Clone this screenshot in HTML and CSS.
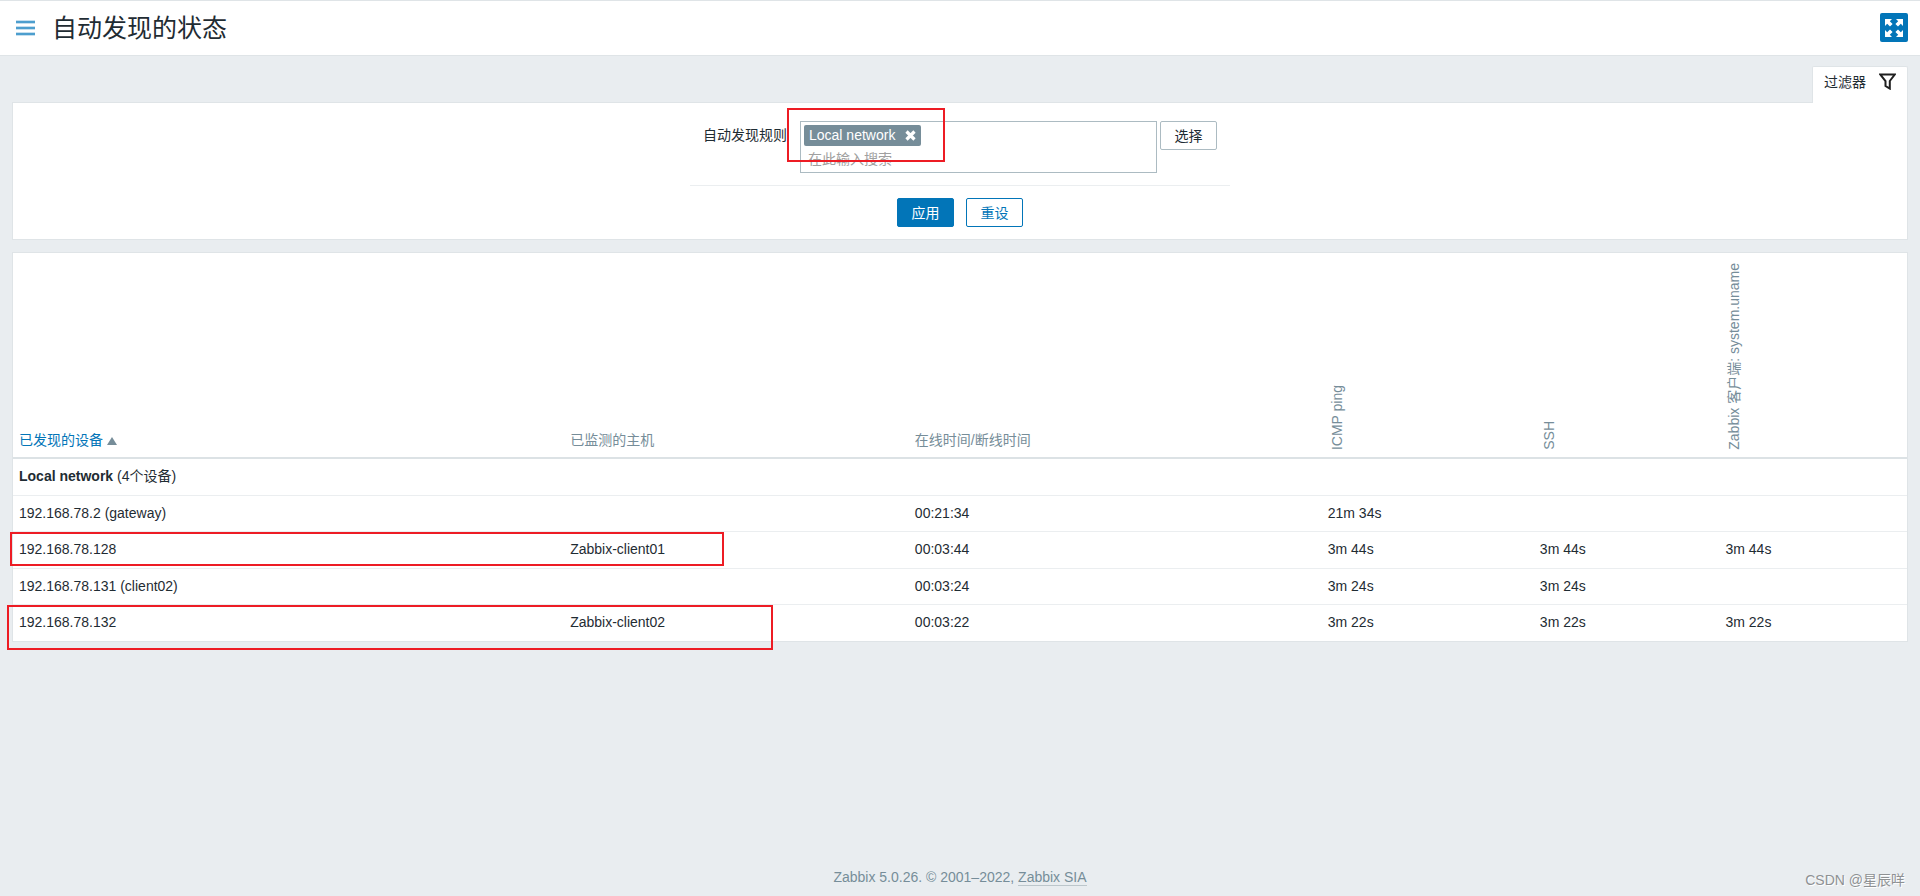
FILE: index.html
```
<!DOCTYPE html>
<html lang="zh-CN">
<head>
<meta charset="utf-8">
<meta name="viewport" content="width=device-width, initial-scale=1">
<title>自动发现的状态</title>
<link rel="stylesheet" href="styles.css">
</head>
<body>
<header class="page-header">
  <button class="menu-button" type="button" aria-label="菜单">
    <svg width="19" height="16" viewBox="0 0 19 16" aria-hidden="true"><path d="M0 2h19M0 8h19M0 14h19" stroke="#8bc0e0" stroke-width="3"/><path d="M0 2h19M0 8h19M0 14h19" stroke="#3a93c8" stroke-width="1.6"/></svg>
  </button>
  <h1 class="page-title">自动发现的状态</h1>
  <button class="fullscreen-button" type="button" aria-label="全屏">
    <svg width="18" height="18" viewBox="0 0 18 18" fill="#fff" aria-hidden="true">
      <path id="arrow" d="M0 0h7L4.800 2.200 7.600 5 5 7.600 2.200 4.800 0 7z"/>
      <use href="#arrow" transform="matrix(-1 0 0 1 18 0)"/>
      <use href="#arrow" transform="matrix(1 0 0 -1 0 18)"/>
      <use href="#arrow" transform="matrix(-1 0 0 -1 18 18)"/>
    </svg>
  </button>
</header>

<main class="content">
  <div class="filter-tabs">
    <button class="filter-tab" type="button">过滤器
      <svg width="17" height="17" viewBox="0 0 17 17" fill="none" stroke="#1f1f1f" stroke-width="2" aria-hidden="true"><path d="M1.200 1.500h14.600L10.800 8v7.600L6.500 13V8z"/></svg>
    </button>
  </div>

  <form class="panel filter">
    <div class="filter-row">
      <label class="filter-label" for="rule">自动发现规则</label>
      <div class="multiselect">
        <span class="tag">Local network
          <button class="tag-remove" type="button" aria-label="移除"><svg width="11" height="11" viewBox="0 0 11 11" aria-hidden="true"><path d="M1.500 1.500l8 8M9.500 1.500l-8 8" stroke="#fff" stroke-width="3.200"/></svg></button>
        </span>
        <input class="search" id="rule" type="text" placeholder="在此输入搜索">
        <div class="mark mark-rule"></div>
      </div>
      <button class="button button-grey" type="button">选择</button>
    </div>
    <div class="filter-actions">
      <button class="button button-primary" type="button">应用</button>
      <button class="button button-outline" type="button">重设</button>
    </div>
  </form>

  <section class="panel results">
    <table class="table">
      <colgroup><col class="col-device"><col class="col-host"><col class="col-uptime"><col class="col-icmp"><col class="col-ssh"><col class="col-agent"></colgroup>
      <thead>
        <tr>
          <th><a class="sort" href="#">已发现的设备<span class="sort-arrow"></span></a></th>
          <th>已监测的主机</th>
          <th>在线时间/断线时间</th>
          <th><span class="vertical">ICMP ping</span></th>
          <th><span class="vertical">SSH</span></th>
          <th><span class="vertical">Zabbix 客户端: system.uname</span></th>
        </tr>
      </thead>
      <tbody>
        <tr><td colspan="6"><b>Local network</b> (4个设备)</td></tr>
        <tr><td>192.168.78.2 (gateway)</td><td></td><td>00:21:34</td><td>21m 34s</td><td></td><td></td></tr>
        <tr><td>192.168.78.128</td><td>Zabbix-client01</td><td>00:03:44</td><td>3m 44s</td><td>3m 44s</td><td>3m 44s</td></tr>
        <tr><td>192.168.78.131 (client02)</td><td></td><td>00:03:24</td><td>3m 24s</td><td>3m 24s</td><td></td></tr>
        <tr><td>192.168.78.132</td><td>Zabbix-client02</td><td>00:03:22</td><td>3m 22s</td><td>3m 22s</td><td>3m 22s</td></tr>
      </tbody>
    </table>
    <div class="mark mark-first"></div>
    <div class="mark mark-second"></div>
  </section>
</main>

<footer class="footer">Zabbix 5.0.26. © 2001–2022, <a class="footer-link" href="#">Zabbix SIA</a></footer>
<div class="watermark">CSDN @星辰咩</div>
</body>
</html>
```
FILE: styles.css
```
* {
  box-sizing: border-box;
}

body {
  display: flex;
  flex-direction: column;
  position: relative;
  min-height: 100vh;
  margin: 0;
  background: #e9edf0;
  color: #1f2c33;
  font: 14px/20px "Liberation Sans", "Noto Sans CJK SC", sans-serif;
}

button,
input {
  font: inherit;
  color: inherit;
}

button {
  padding: 0;
  border: 0;
  background: none;
  cursor: pointer;
}

svg {
  display: block;
}

.page-header {
  display: flex;
  align-items: center;
  height: 56px;
  padding: 0 12px 1px 16px;
  border-top: 1px solid #dfe4e7;
  border-bottom: 1px solid #dfe4e7;
  background: #fff;
}

.page-title {
  flex: 1;
  margin: 0 0 0 17px;
  font-size: 25px;
  font-weight: 400;
  line-height: 36px;
}

.fullscreen-button {
  display: flex;
  align-items: center;
  justify-content: center;
  width: 28px;
  height: 29px;
  border-radius: 2px;
  background: #0275b8;
}

.content {
  flex: 1;
  padding: 10px 12px 0;
}

.filter-tabs {
  display: flex;
  justify-content: flex-end;
}

.filter-tab {
  display: flex;
  align-items: center;
  gap: 13px;
  position: relative;
  height: 37px;
  margin-bottom: -1px;
  padding: 0 11px 7px;
  border: 1px solid #dfe4e7;
  border-bottom: 0;
  border-radius: 2px 2px 0 0;
  background: #fff;
  z-index: 1;
}

.panel {
  position: relative;
  border: 1px solid #dfe4e7;
  background: #fff;
}

.filter {
  display: flex;
  flex-direction: column;
  align-items: center;
  padding: 18px 0 12px;
}

.filter-row {
  display: flex;
  align-items: flex-start;
  width: 540px;
  padding-bottom: 12px;
  border-bottom: 1px solid #ebeef0;
}

.filter-label {
  width: 97px;
  margin-right: 13px;
  padding-top: 4px;
  text-align: right;
}

.multiselect {
  position: relative;
  width: 357px;
  height: 52px;
  margin-right: 3px;
  padding: 3px;
  border: 1px solid #acbbc2;
}

.tag {
  display: flex;
  align-items: center;
  gap: 10px;
  width: max-content;
  height: 21px;
  padding: 0 5px 1px;
  border-radius: 2px;
  background: #768d99;
  color: #fff;
}

.tag-remove {
  flex: none;
}

.search {
  display: block;
  width: 100%;
  height: 26px;
  padding: 0 4px;
  border: 0;
  outline: 0;
  background: none;
}

.search::placeholder {
  color: #a0a0a0;
}

.button {
  width: 57px;
  height: 29px;
  border: 1px solid #0275b8;
  border-radius: 2px;
}

.button-grey {
  border-color: #acbbc2;
}

.button-primary {
  background: #0275b8;
  color: #fff;
}

.button-outline {
  color: #0275b8;
}

.filter-actions {
  display: flex;
  gap: 12px;
  padding-top: 12px;
}

.results {
  margin-top: 12px;
}

.table {
  width: 100%;
  table-layout: fixed;
  border-collapse: separate;
  border-spacing: 0;
}

.col-device { width: 29.1%; }
.col-host { width: 18.2%; }
.col-uptime { width: 21.8%; }
.col-icmp { width: 11.2%; }
.col-ssh { width: 9.8%; }
.col-agent { width: 9.9%; }

th {
  height: 206px;
  padding: 6px 6px 7px;
  border-bottom: 2px solid #dce2e5;
  color: #768d99;
  font-weight: 400;
  text-align: left;
  vertical-align: bottom;
}

td {
  height: 36px;
  padding: 0 6px 2px;
  border-bottom: 1px solid #ebeef0;
}

tr:nth-child(odd) > td {
  height: 37px;
}

tbody > tr:last-child > td {
  height: 36px;
  border-bottom: 0;
}

.sort {
  color: #0275b8;
  text-decoration: none;
}

.sort-arrow {
  display: inline-block;
  margin-left: 4px;
  border: 5px solid transparent;
  border-top: 0;
  border-bottom: 8px solid #768d99;
}

.vertical {
  display: block;
  width: 18px;
  line-height: 18px;
  white-space: nowrap;
  writing-mode: sideways-lr;
}

.mark {
  position: absolute;
  border: 2px solid #ed1c24;
  pointer-events: none;
}

.mark-rule {
  top: -14px;
  left: -14px;
  width: 158px;
  height: 54px;
}

.mark-first {
  top: 279px;
  left: -3px;
  width: 714px;
  height: 34px;
}

.mark-second {
  top: 352px;
  left: -6px;
  width: 766px;
  height: 45px;
}

.footer {
  padding: 10px 12px 9px;
  color: #768d99;
  text-align: center;
}

.footer-link {
  border-bottom: 1px solid #bcc6cb;
  color: inherit;
  text-decoration: none;
}

.watermark {
  position: absolute;
  right: 15px;
  bottom: 6px;
  color: #8e9193;
  text-shadow: 1px 1px 0 #fff;
}
```
